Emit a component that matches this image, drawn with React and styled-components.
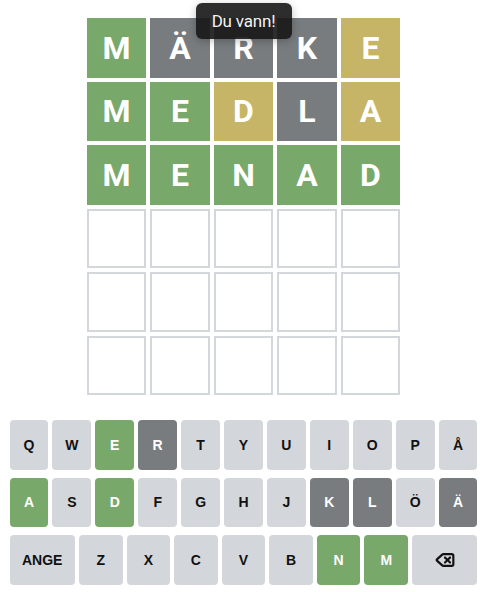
import React from "react";
import styled, { createGlobalStyle } from "styled-components";
import { Delete } from "lucide-react";

const GlobalStyle = createGlobalStyle`
  html, body { margin: 0; padding: 0; background: #ffffff; }
  body { font-family: "Liberation Sans", Arial, sans-serif; }
`;

const COLORS = {
  correct: "#79a86b",
  present: "#c6b566",
  absent: "#787c7e",
  empty: "#ffffff",
  key: "#d3d6da",
};

const Page = styled.div`
  position: relative;
  width: 487px;
  padding-top: 18px;
  display: flex;
  flex-direction: column;
  align-items: center;
`;

const Board = styled.div`
  display: grid;
  grid-template-columns: repeat(5, 59.5px);
  grid-auto-rows: 59.5px;
  gap: 4px;
`;

const Tile = styled.div`
  box-sizing: border-box;
  display: flex;
  align-items: center;
  justify-content: center;
  font-family: Roboto, "Liberation Sans", sans-serif;
  font-weight: 700;
  font-size: 32px;
  color: #ffffff;
  background: ${(p) => COLORS[p.$state]};
  border: 2px solid ${(p) => (p.$state === "empty" ? "#d3d6da" : COLORS[p.$state])};
`;

const Toast = styled.div`
  position: absolute;
  top: 3px;
  left: 50%;
  transform: translateX(-50%);
  width: 96px;
  height: 36px;
  box-sizing: border-box;
  display: flex;
  align-items: center;
  justify-content: center;
  background: rgba(22, 22, 22, 0.9);
  border-radius: 6px;
  box-shadow: 0 2px 8px rgba(0, 0, 0, 0.25);
  color: #f2f2f2;
  font-family: Roboto, "Liberation Sans", sans-serif;
  font-size: 17px;
  letter-spacing: -0.2px;
`;

const Keyboard = styled.div`
  margin-top: 25px;
  width: 468px;
  display: flex;
  flex-direction: column;
  gap: 8px;
`;

const KeyRow = styled.div`
  display: flex;
  gap: 4px;
`;

const Key = styled.button`
  flex: ${(p) => (p.$wide ? 1.5 : 1)};
  min-width: 0;
  height: 49.5px;
  padding: 0;
  border: none;
  border-radius: 4px;
  display: flex;
  align-items: center;
  justify-content: center;
  font-family: "Liberation Sans", Arial, sans-serif;
  font-weight: 700;
  font-size: 14px;
  background: ${(p) => COLORS[p.$state] || COLORS.key};
  color: ${(p) => (p.$state ? "#ffffff" : "#111111")};
`;

const guesses = [
  [["M", "correct"], ["Ä", "absent"], ["R", "absent"], ["K", "absent"], ["E", "present"]],
  [["M", "correct"], ["E", "correct"], ["D", "present"], ["L", "absent"], ["A", "present"]],
  [["M", "correct"], ["E", "correct"], ["N", "correct"], ["A", "correct"], ["D", "correct"]],
];

const keyStates = {
  E: "correct", R: "absent", A: "correct", D: "correct",
  K: "absent", L: "absent", Ä: "absent", N: "correct", M: "correct",
};

const rows = [
  ["Q", "W", "E", "R", "T", "Y", "U", "I", "O", "P", "Å"],
  ["A", "S", "D", "F", "G", "H", "J", "K", "L", "Ö", "Ä"],
  ["ANGE", "Z", "X", "C", "V", "B", "N", "M", "DEL"],
];

export default function App() {
  const cells = [];
  for (let r = 0; r < 6; r++) {
    for (let c = 0; c < 5; c++) {
      const g = guesses[r] && guesses[r][c];
      cells.push(
        <Tile key={`${r}-${c}`} $state={g ? g[1] : "empty"}>
          {g ? g[0] : ""}
        </Tile>
      );
    }
  }
  return (
    <>
      <GlobalStyle />
      <Page>
        <Board>{cells}</Board>
        <Toast>Du vann!</Toast>
        <Keyboard>
          {rows.map((row, i) => (
            <KeyRow key={i}>
              {row.map((k) => {
                const wide = k === "ANGE" || k === "DEL";
                return (
                  <Key key={k} $wide={wide} $state={keyStates[k]}>
                    {k === "DEL" ? <Delete size={20} strokeWidth={2.6} /> : k}
                  </Key>
                );
              })}
            </KeyRow>
          ))}
        </Keyboard>
      </Page>
    </>
  );
}
